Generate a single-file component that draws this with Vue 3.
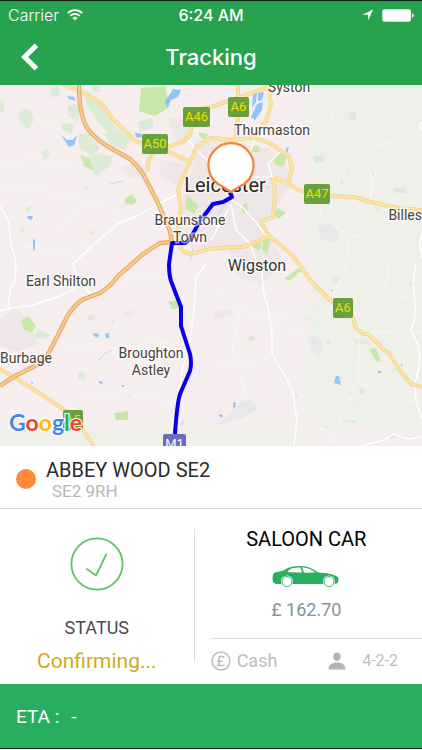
<template>
  <div class="tracking-page">
    <header class="top">
      <div class="status-bar">
        <div class="carrier">
          <span>Carrier</span>
          <svg width="16" height="12" viewBox="0 0 16 12" aria-hidden="true">
            <g fill="none" stroke="#fff" stroke-width="1.8">
              <path d="M0.8 4.2C4.8 0.2 11.2 0.2 15.2 4.2" />
              <path d="M3.4 6.8C6 4.3 10 4.3 12.6 6.8" />
            </g>
            <path d="M5.4 8.9C6.9 7.5 9.1 7.5 10.6 8.9L8 11.6Z" fill="#fff" />
          </svg>
        </div>
        <span class="clock">6:24 AM</span>
        <div class="indicators">
          <svg width="12" height="12" viewBox="0 0 12 12" aria-hidden="true">
            <path d="M11.2 0.6L0.4 5.8H6.1V11.6Z" fill="#fff" />
          </svg>
          <svg width="32" height="13" viewBox="0 0 32 13" aria-hidden="true">
            <rect x="0.3" y="0.3" width="28.6" height="12.4" rx="2" fill="#fff" />
            <path d="M30 4.4C32.2 5 32.2 8 30 8.6Z" fill="#fff" />
          </svg>
        </div>
      </div>
      <nav class="title-bar">
        <button class="back-btn" type="button" aria-label="Back">
          <svg width="18" height="28" viewBox="0 0 18 28" aria-hidden="true">
            <path d="M16.4 2.2L4.6 14L16.4 25.8" fill="none" stroke="#fff" stroke-width="5" />
          </svg>
        </button>
        <h1>Tracking</h1>
      </nav>
    </header>

    <svg class="map" viewBox="0 85 422 361" role="img" aria-label="Route map">
      <rect y="85" width="422" height="361" fill="#f6eeee" />
      <path d="M307 85H422V427H307ZM0 428H307V446H0Z" fill="#f0f0eb" />

      <!-- built-up areas -->
      <g fill="#efe7e7">
        <path d="M196 140L236 142L268 148L290 170L288 188L273 215L262 224L270 238L284 262L262 284L236 276L228 250L196 250L180 240L182 200L194 162Z" />
        <path d="M168 118L192 116L190 138L176 142Z" />
        <path d="M160 160L188 165L180 188L160 176Z" />
        <path d="M0 318L16 308L28 322L38 344L20 352L0 346Z" />
        <path d="M120 168L140 160L148 176L130 178Z" />
        <path d="M26 276L46 280L44 288L26 286Z" />
        <path d="M212 312L230 309L233 316L214 319Z" />
        <path d="M124 312L134 310L132 318L124 318Z" />
      </g>
      <g fill="#e8e8e8">
        <path d="M214 427L230 413L240 402L250 400L259 408L244 418L226 422Z" />
        <path d="M308 338L316 336L324 346L320 356L312 352Z" />
        <path d="M330 278L342 276L338 283L332 285Z" />
        <path d="M350 338L368 340L370 345L356 344Z" />
        <path d="M316 226L330 224L340 232L336 242L322 240Z" />
      </g>

      <!-- woods and parks -->
      <g fill="#dcebd8">
        <path v-for="(d, i) in woods" :key="i" :d="d" />
      </g>
      <g fill="#c9e7a8">
        <path d="M141 88L165 86L170 106L162 112L155 116L139 111Z" />
        <path d="M80 155L89 158L93 170L84 166Z" />
        <path d="M124 200L131 194L137 201L132 205L126 204Z" />
        <path d="M187 195L199 206L194 214L185 208Z" />
        <path d="M198 132L208 134L206 140L201 138Z" />
        <path d="M250 147L258 145L260 152L252 152Z" />
        <path d="M273 160L280 153L287 156L284 166L276 165Z" />
        <path d="M241 206L247 203L248 211L243 214Z" />
        <path d="M273 213L278 208L286 213L278 219Z" />
        <path d="M250 243L261 242L260 250L255 249Z" />
        <path d="M263 238L271 236L268 254L262 250Z" />
        <path d="M285 278L300 267L303 270L289 281Z" />
        <path d="M369 349L376 348L381 361L377 362Z" />
        <path d="M21 320L28 316L36 326L32 332L24 330Z" />
        <path d="M168 302L176 300L180 309L172 309Z" />
        <path d="M114 413L128 411L128 420L116 420Z" />
      </g>

      <!-- water -->
      <g fill="#8fc3fb">
        <path d="M165 101L170 94L173 89L181 90L178 97L171 100L167 108Z" />
        <path d="M61 135L67 140L72 140L77 136L74 145L69 147Z" />
        <path d="M67 96L74 97L76 101L69 99Z" />
        <path d="M135 133L142 134L141 138L136 137Z" />
        <path d="M253 95L257 92L256 102L252 108ZM258 93L264 92L262 100L258 101ZM257 104L263 102L262 110L255 120L251 117Z" />
        <path d="M336 376L339 376L341 385L334 383Z" />
        <path d="M93 333L99 334L98 338L94 336ZM105 334L109 333L109 338L106 338Z" />
        <path d="M27 216L33 216L32 220L28 219ZM33 239L35 240L35 251L33 249Z" />
        <path d="M219 414L223 415L222 418L219 416ZM233 403L236 402L235 408L233 407Z" />
        <path d="M286 148L289 147L287 154ZM267 187L269 186L268 188Z" />
        <path d="M99 381L103 382L102 384L99 383ZM122 385L124 385L124 387L122 387ZM31 382L33 382L33 384L31 383Z" />
        <path d="M378 371L381 371L381 373L378 373ZM400 364L403 365L402 367ZM331 290L333 290L333 291L331 291Z" />
      </g>
      <g fill="none" stroke="#a8cdf2" stroke-width="0.7">
        <path d="M98 361L104 354L112 350M112 323L115 319" />
        <path d="M110 184L123 181M84 187L88 190" />
        <path d="M390 438L398 435L404 437" />
        <path d="M219 214L224 205M190 262L193 248" />
      </g>

      <!-- minor roads -->
      <g fill="none" stroke="#fff" stroke-linejoin="round">
        <g stroke-width="1.4">
          <path d="M0 206L8 220L12 248L16 262L15 280L10 290L8 309" />
          <path d="M0 311L12 308L34 305L62 295L76 287M90 294L76 274L73 264L91 247L118 224L139 215L160 203L176 195" />
          <path d="M262 272L263 290L268 308L272 334L272 354L285 376L293 392L295 410L297 418L294 446" />
          <path d="M416 264L413 282L416 314L411 330L419 347L420 362L415 384L416 402L422 419" />
          <path d="M361 446L384 440L394 434L408 439L422 437" />
          <path d="M206 264L196 278L194 310L190 342L182 372L178 400L170 434" />
          <path d="M232 200L243 208L256 222L266 236M231 204L236 230L250 244L256 260L262 272M229 208L211 240" />
          <path d="M256 137L250 152L241 170M188 140L196 150L216 168M272 176L268 164L280 152M251 177H274" />
          <path d="M422 232L420 244L422 258M422 122L419 126L422 130" />
        </g>
        <g stroke-width="0.8" opacity="0.5">
          <path d="M0 167L30 158L60 164L86 158M20 100L34 118L60 125L78 118" />
          <path d="M0 186L40 190L90 202L124 215M55 240L66 220L94 202" />
          <path d="M20 246L50 250L90 247M96 290L140 276L170 278" />
          <path d="M60 350L90 344L120 350L150 342L190 345" />
          <path d="M40 420L80 398L130 396L176 402" />
          <path d="M211 290L228 296L240 310L270 318L300 310M240 310L232 350L240 372L246 400" />
          <path d="M211 364L244 368L270 356M273 322L290 330L307 336" />
          <path d="M307 120L340 132L360 150L372 178L370 202M320 90L340 132M360 150L400 140L422 150" />
          <path d="M318 196L322 220L350 236L380 234L410 220M350 236L345 270L331 300" />
          <path d="M310 360L340 350L360 334L400 331L422 332M360 334L358 380L380 400L422 400M330 446L344 410L358 380" />
          <path d="M370 200L376 170L400 160M380 234L390 262L384 290L410 300" />
        </g>
      </g>

      <!-- A roads -->
      <g fill="none" stroke-linejoin="round">
        <g stroke="#efd595" stroke-width="4">
          <path v-for="d in mainRoads" :key="d" :d="d" />
        </g>
        <g stroke="#fbe3a0" stroke-width="2.6">
          <path v-for="d in mainRoads" :key="d" :d="d" />
        </g>
        <g stroke="#e2a869" stroke-width="4.4">
          <path v-for="d in motorways" :key="d" :d="d" />
        </g>
        <g stroke="#fac98a" stroke-width="2.4">
          <path v-for="d in motorways" :key="d" :d="d" />
        </g>
        <path
          d="M229 190L232 197L223 202L213 204L200 221L190 239L185 243L172 243L169 264Q169 275 171 281L181 307V326L190 354Q192 363 190 371L180 394Q177 404 175 434"
          stroke="#0a00e6"
          stroke-width="4"
        />
      </g>

      <g v-for="(s, i) in shields" :key="i" class="shield">
        <rect :x="s.x" :y="s.y" :width="s.w" height="20" rx="2" :fill="s.fill" />
        <text :x="s.x + s.w / 2" :y="s.y + 14" :fill="s.color">{{ s.name }}</text>
      </g>

      <g class="places">
        <text v-for="p in places" :key="p.name" :x="p.x" :y="p.y" :class="p.size">{{ p.name }}</text>
      </g>

      <path
        d="M231 192L222 186.2A22.5 22.5 0 1 1 240 186.2Z"
        fill="#fff"
        stroke="#f9813a"
        stroke-width="2.2"
      />

      <text class="google" x="9" y="431">
        <tspan fill="#4285f4">G</tspan><tspan fill="#ea4335">o</tspan><tspan fill="#fbbc05">o</tspan><tspan fill="#4285f4">g</tspan><tspan fill="#34a853">l</tspan><tspan fill="#ea4335">e</tspan>
      </text>
    </svg>

    <section class="address">
      <span class="dot"></span>
      <div>
        <div class="street">ABBEY WOOD SE2</div>
        <div class="postcode">SE2 9RH</div>
      </div>
    </section>

    <section class="details">
      <div class="status">
        <svg width="54" height="54" viewBox="0 0 54 54" aria-hidden="true">
          <g fill="none" stroke="#5cc464" stroke-width="1.8" stroke-linecap="round">
            <circle cx="27" cy="27" r="25.6" />
            <path d="M17 32L26 38.5L36.2 17.5" />
          </g>
        </svg>
        <div class="status-label">STATUS</div>
        <div class="status-value">Confirming...</div>
      </div>
      <div class="divider"></div>
      <div class="vehicle">
        <div class="vehicle-name">SALOON CAR</div>
        <svg class="car" width="68" height="23" viewBox="0 0 68 23" aria-hidden="true">
          <path
            d="M1 9.5L2.5 7.5C7 7 11 6 14 4C18 1.8 22 1 28 1C37 1 41 4 46 7.5C54 8 62 9 65 11.5L66.5 13L66 18L63 19H4L1 17.5L0.5 13Z"
            fill="#28ae60"
          />
          <path d="M15.5 6.5C18 3.2 22 2.5 28.5 2.5L30 7.5L17 7.2ZM30 2.5C36 2.6 39.5 4.5 43.5 7.5L32 7.8Z" fill="#fff" />
          <g fill="#fff">
            <circle cx="15" cy="16.5" r="6" />
            <circle cx="57" cy="16.5" r="6" />
          </g>
          <g fill="#fff" stroke="#28ae60" stroke-width="0.9">
            <circle cx="15" cy="16.5" r="5" />
            <circle cx="57" cy="16.5" r="5" />
          </g>
        </svg>
        <div class="price">£ 162.70</div>
        <div class="extras">
          <div class="payment">
            <svg width="20" height="20" viewBox="0 0 20 20" aria-hidden="true">
              <g fill="none" stroke="#bdbdbd" stroke-width="1.5">
                <circle cx="10" cy="10" r="9" />
                <path d="M13.2 7.2C12.6 4.4 8 4.5 8 7.6C8 9.8 9.6 12.8 7 14.5H13.5M6.3 10.3H11.6" />
              </g>
            </svg>
            <span>Cash</span>
          </div>
          <div class="capacity">
            <svg width="18" height="18" viewBox="0 0 18 18" aria-hidden="true">
              <path d="M9 0.5C14.5 0.5 13.5 9 9 9C4.5 9 3.5 0.5 9 0.5ZM0.5 17.5C0.5 12.5 4 10.5 9 10.5C14 10.5 17.5 12.5 17.5 17.5Z" fill="#b5b5b5" />
            </svg>
            <span>4-2-2</span>
          </div>
        </div>
      </div>
    </section>

    <footer class="eta">
      <span>ETA :</span>
      <span>-</span>
    </footer>
  </div>
</template>

<script setup>
const motorways = [
  'M79 84Q79 105 82 114Q84 126 92 134Q98 140 107 146L130 159Q138 166 143 174L157 201L170 231L172 242',
  'M172 242L160 243L143 254L118 276Q110 287 100 293L84 299Q76 303 68 315L57 337L47 356Q42 362 33 367L17 375Q8 380 0 386'
]

const mainRoads = [
  'M63 84L80 91L100 102L113 119L133 139L143 144L170 152L190 162',
  'M147 171L149 159L157 150L183 142L190 135L196 110L211 107L228 101L241 97L268 87',
  'M238 84V117L235 142',
  'M268 84L271 104L266 121L254 137',
  'M288 184L292 169L289 156L271 144L254 137L234 140L211 138L197 146L190 162L178 189L181 207L178 224L180 247L184 252L190 254L211 249L231 247L244 247L269 236',
  'M274 177L288 184L301 191L331 196L354 197L371 202L398 208L422 210',
  'M273 177L275 194L273 217L261 222L269 236L291 254L302 268L311 281L331 301L353 317L356 328L363 334L368 334L384 350L389 353L398 368L411 384L422 387',
  'M0 369L30 387L63 409L75 418L94 446'
]

const woods = [
  'M0 100L5 104L3 114L0 112Z',
  'M18 114L24 108L32 112L34 120L28 130L20 122Z',
  'M50 90L58 86L60 94L52 98Z',
  'M68 106L76 104L82 114L76 122L68 116Z',
  'M84 90L96 98L108 112L116 128L108 132L96 120L86 104Z',
  'M60 122L74 124L72 134L62 130Z',
  'M104 134L118 128L130 140L124 150L110 144Z',
  'M78 134L88 134L100 148L92 156L80 148Z',
  'M86 158L96 154L112 156L110 166L96 176L90 168Z',
  'M42 152L48 148L50 156L44 160Z',
  'M138 122L152 118L154 128L140 132Z',
  'M153 92L160 88L164 96L156 102Z',
  'M92 86L99 86L101 92L94 92Z',
  'M26 208L32 206L30 212L26 212Z',
  'M20 228L24 226L24 232L20 232Z',
  'M33 336L39 329L50 335L47 339L36 338Z',
  'M78 374L84 371L85 380L78 379Z',
  'M88 316L94 314L94 320L88 320Z',
  'M349 112L356 113L356 120L350 121Z',
  'M313 157L324 155L325 161L315 164Z',
  'M394 188L405 187L406 193L396 193Z',
  'M340 179L344 180L343 184L340 183Z',
  'M345 171L349 173L348 176Z',
  'M371 171L374 173L373 176Z',
  'M410 281L414 280L414 286L410 287Z',
  'M248 337L254 336L254 341L250 341Z',
  'M326 342L330 341L330 345L327 345Z',
  'M359 389L364 388L364 394L360 394Z',
  'M348 391L352 391L351 397ZM352 399L357 402L355 403Z',
  'M343 421L355 420L356 423L344 422Z',
  'M325 426L329 426L328 428L325 428Z',
  'M285 392L290 391L289 394ZM294 393L299 394L297 397Z',
  'M303 316L309 318L307 320ZM316 325L319 322L318 327Z',
  'M313 305L320 310L318 311Z',
  'M340 377L344 377L343 379L340 379Z',
  'M374 206L380 208L378 211Z',
  'M178 424L184 420L184 427Z',
  'M125 395L132 396L130 399Z',
  'M160 388L162 387L162 390Z',
  'M90 232L94 230L95 234L91 235Z'
]

const green = { fill: '#6a9f3d', color: '#e8e400' }

const shields = [
  { name: 'A46', x: 183, y: 107, w: 27, ...green },
  { name: 'A6', x: 228, y: 97, w: 21, ...green },
  { name: 'A50', x: 142, y: 134, w: 26, ...green },
  { name: 'A47', x: 304, y: 184, w: 26, ...green },
  { name: 'A6', x: 333, y: 298, w: 20, ...green },
  { name: 'A5', x: 63, y: 410, w: 20, ...green },
  { name: 'M1', x: 163, y: 434, w: 23, fill: '#6b6bc4', color: '#fff' }
]

const places = [
  { name: 'Syston', x: 289, y: 92 },
  { name: 'Thurmaston', x: 272, y: 135 },
  { name: 'Leicester', x: 225, y: 192, size: 'city' },
  { name: 'Billesdon', x: 417, y: 220 },
  { name: 'Braunstone', x: 190, y: 225 },
  { name: 'Town', x: 190, y: 242 },
  { name: 'Wigston', x: 257, y: 271, size: 'town' },
  { name: 'Earl Shilton', x: 61, y: 286 },
  { name: 'Burbage', x: 26, y: 363 },
  { name: 'Broughton', x: 151, y: 358 },
  { name: 'Astley', x: 151, y: 375 }
]
</script>

<style>
body {
  margin: 0;
  background: #fff;
}
</style>

<style scoped>
.tracking-page {
  font-family: Roboto, "Liberation Sans", sans-serif;
  border-top: 1px solid #0c1f12;
  border-bottom: 1px solid #0c1f12;
  background: #fff;
  color: #2b2b2b;
}

.top {
  background: #27a24e;
  color: #fff;
  font-family: Inter, "Liberation Sans", sans-serif;
}

.status-bar {
  display: grid;
  grid-template-columns: 1fr auto 1fr;
  align-items: center;
  height: 28px;
  padding: 0 8px;
  font-size: 16px;
}

.carrier,
.indicators {
  display: flex;
  align-items: center;
  gap: 8px;
}

.carrier {
  font-weight: 300;
}

.indicators {
  justify-content: flex-end;
}

.clock {
  font-weight: 500;
}

.title-bar {
  display: grid;
  grid-template-columns: 60px 1fr 60px;
  align-items: center;
  height: 56px;
}

.back-btn {
  display: flex;
  padding: 0 20px;
  border: 0;
  background: none;
  cursor: pointer;
}

.back-btn svg {
  flex-shrink: 0;
}

h1 {
  margin: 0;
  font-size: 22px;
  font-weight: 500;
  line-height: 28px;
  text-align: center;
}

.map {
  display: block;
  width: 100%;
  height: auto;
}

.shield text {
  font-size: 13px;
  text-anchor: middle;
}

.places text {
  font-size: 14px;
  fill: #4a443c;
  stroke: #fff;
  stroke-width: 3px;
  stroke-opacity: 0.6;
  paint-order: stroke;
  text-anchor: middle;
}

.places .town {
  font-size: 16px;
  fill: #38342f;
}

.places .city {
  font-size: 20px;
  fill: #2a2724;
}

.google {
  font-family: Lato, "Liberation Sans", sans-serif;
  font-size: 23px;
  font-weight: 700;
  stroke: #fff;
  stroke-width: 2px;
  paint-order: stroke;
}

.address {
  display: flex;
  align-items: center;
  gap: 10px;
  padding: 12px 16px 8px;
  border-bottom: 1px solid #dcdcdc;
}

.dot {
  width: 20px;
  height: 20px;
  border-radius: 50%;
  background: #ff8a38;
}

.street {
  font-size: 20px;
  line-height: 24px;
}

.postcode {
  padding-left: 6px;
  font-size: 17px;
  line-height: 18px;
  color: #b8b8b8;
}

.details {
  display: grid;
  grid-template-columns: 46fr 1px 54fr;
  padding: 20px 0 10px;
}

.status {
  display: flex;
  flex-direction: column;
  align-items: center;
  padding-top: 8px;
}

.divider {
  margin-bottom: 12px;
  background: #dcdcdc;
}

.status-label {
  margin-top: 25px;
  font-size: 18px;
  line-height: 24px;
  color: #4a4a4f;
}

.status-value {
  margin-top: 8px;
  font-size: 21px;
  line-height: 26px;
  color: #d0a918;
}

.vehicle {
  display: flex;
  flex-direction: column;
  align-items: center;
  padding: 0 20px 0 16px;
}

.vehicle-name {
  font-size: 20px;
  line-height: 20px;
  color: #000;
}

.car {
  margin-top: 16px;
}

.price {
  margin-top: 10px;
  font-size: 18px;
  line-height: 24px;
  color: #8094a0;
}

.extras {
  display: flex;
  align-items: center;
  align-self: stretch;
  justify-content: space-between;
  margin: 16px -20px 0 0;
  padding: 10px 24px 0 0;
  border-top: 1px solid #dcdcdc;
  color: #bdbdbd;
}

.payment,
.capacity {
  display: flex;
  align-items: center;
  font-size: 18px;
  line-height: 24px;
}

.payment {
  gap: 6px;
}

.capacity {
  gap: 16px;
  font-size: 16px;
}

.eta {
  display: flex;
  align-items: center;
  gap: 12px;
  height: 64px;
  padding: 0 16px;
  background: #28ae60;
  color: #fff;
  font-size: 19px;
}
</style>
